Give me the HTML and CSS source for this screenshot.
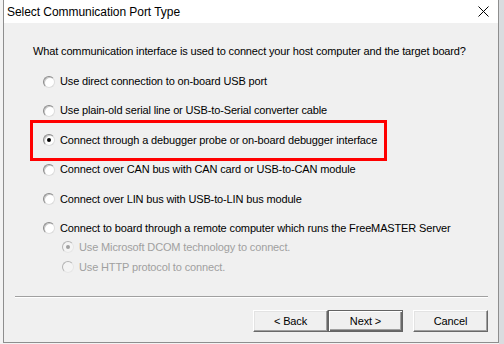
FILE: index.html
```html
<!DOCTYPE html>
<html>
<head>
<meta charset="utf-8">
<link rel="stylesheet" href="styles.css">
</head>
<body>
<div class="window">
  <div class="titlebar">
    <span class="title">Select Communication Port Type</span>
    <svg class="close" width="11" height="11" viewBox="0 0 11 11"><path d="M0.5 0.5 L10.5 10.5 M10.5 0.5 L0.5 10.5" stroke="#000" stroke-width="1" fill="none"/></svg>
  </div>
  <div class="content">
    <p class="question">What communication interface is used to connect your host computer and the target board?</p>
    <div class="options">
      <div class="opt"><span class="radio"></span><span class="label">Use direct connection to on-board USB port</span></div>
      <div class="opt"><span class="radio"></span><span class="label">Use plain-old serial line or USB-to-Serial converter cable</span></div>
      <div class="opt highlighted"><span class="radio checked"></span><span class="label">Connect through a debugger probe or on-board debugger interface</span><span class="mark"></span></div>
      <div class="opt"><span class="radio"></span><span class="label">Connect over CAN bus with CAN card or USB-to-CAN module</span></div>
      <div class="opt"><span class="radio"></span><span class="label">Connect over LIN bus with USB-to-LIN bus module</span></div>
      <div class="group">
        <div class="opt"><span class="radio"></span><span class="label">Connect to board through a remote computer which runs the FreeMASTER Server</span></div>
        <div class="suboptions">
          <div class="opt disabled"><span class="radio checked"></span><span class="label">Use Microsoft DCOM technology to connect.</span></div>
          <div class="opt disabled"><span class="radio"></span><span class="label">Use HTTP protocol to connect.</span></div>
        </div>
      </div>
    </div>
    <div class="footer">
      <div class="separator"></div>
      <div class="buttons">
        <button class="btn">&lt; Back</button>
        <button class="btn default">Next &gt;</button>
        <button class="btn cancel">Cancel</button>
      </div>
    </div>
  </div>
</div>
</body>
</html>
```

FILE: styles.css
```css
html, body {
  margin: 0;
  padding: 0;
}
body {
  width: 504px;
  height: 344px;
  overflow: hidden;
  background: linear-gradient(to right, #f3f3f3 0, #f3f3f3 499px, #d9dcdf 499px);
  font-family: "Liberation Sans", Arial, sans-serif;
  font-size: 11px;
  letter-spacing: -0.14px;
  color: #000;
}
.window {
  margin-left: 3px;
  width: 496px;
  height: 343px;
  box-sizing: border-box;
  border: 1px solid #8e8e8e;
  border-top: none;
  background: #f0f0f0;
  display: flex;
  flex-direction: column;
}
.titlebar {
  height: 23px;
  flex: none;
  background: #fff;
  display: flex;
  align-items: center;
  justify-content: space-between;
  padding: 0 9px 0 3px;
}
.title {
  font-family: "Liberation Sans", Arial, sans-serif;
  font-size: 12px;
  letter-spacing: -0.05px;
  line-height: 14px;
}
.close {
  display: block;
}
.content {
  flex: 1;
  display: flex;
  flex-direction: column;
  padding: 22px 10px 10px 0;
}
.question {
  margin: 0 0 0 29px;
  line-height: 13px;
}
.options {
  display: flex;
  flex-direction: column;
  gap: 16.4px;
  margin-top: 17px;
  padding-left: 39px;
}
.opt {
  display: flex;
  align-items: center;
  height: 13px;
  line-height: 13px;
  position: relative;
  white-space: nowrap;
}
.label {
  margin-left: 5px;
}
.radio {
  flex: none;
  width: 12px;
  height: 12px;
  box-sizing: border-box;
  border-radius: 50%;
  border: 1px solid;
  border-color: #8a8a8a #dcdcdc #dcdcdc #8a8a8a;
  background: #fff;
  box-shadow: inset 1px 1px 0 #c8c8c8;
  position: relative;
}
.radio.checked::after {
  content: "";
  position: absolute;
  left: 3px;
  top: 3px;
  width: 4px;
  height: 4px;
  border-radius: 50%;
  background: #000;
}
.mark {
  position: absolute;
  left: -13px;
  top: -14px;
  width: 357px;
  height: 41px;
  box-sizing: border-box;
  border: 3px solid #ff0000;
}
.suboptions {
  display: flex;
  flex-direction: column;
  gap: 7px;
  margin-top: 6px;
  padding-left: 19px;
}
.opt.disabled {
  color: #a0a0a0;
}
.opt.disabled .radio {
  background: #f4f4f4;
  border-color: #b4b4b4 #e6e6e6 #e6e6e6 #b4b4b4;
  box-shadow: none;
}
.opt.disabled .radio.checked::after {
  background: #a0a0a0;
}
.footer {
  margin-top: auto;
}
.separator {
  margin: 0 0 0 11px;
  height: 1px;
  background: #a0a0a0;
  border-bottom: 1px solid #fff;
}
.buttons {
  display: flex;
  justify-content: flex-end;
  margin-top: 12px;
}
.btn {
  width: 75px;
  height: 22px;
  box-sizing: border-box;
  margin: 0;
  padding: 0;
  font-family: "Liberation Sans", Arial, sans-serif;
  font-size: 11px;
  letter-spacing: -0.14px;
  color: #000;
  background: #f0f0f0;
  border: 1px solid;
  border-color: #fff #696969 #696969 #fff;
  box-shadow: inset -1px -1px 0 #a0a0a0, inset 1px 1px 0 #e3e3e3;
}
.btn.default {
  border: 1px solid #646464;
  box-shadow: inset 1px 1px 0 #fff, inset -1px -1px 0 #696969, inset -2px -2px 0 #a0a0a0;
}
.btn.cancel {
  margin-left: 10px;
}
```
